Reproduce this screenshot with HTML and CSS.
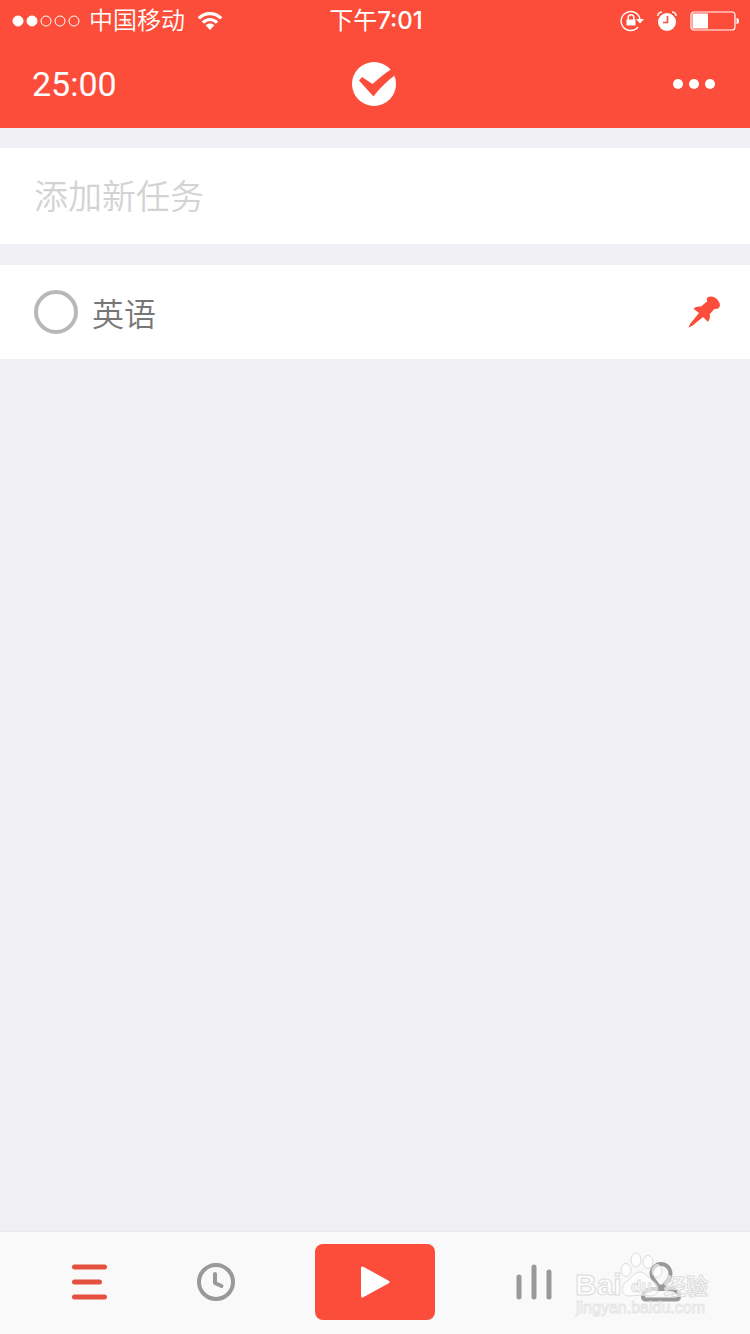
FILE: index.html
```html
<!DOCTYPE html>
<html lang="zh-CN">

<head>
    <meta charset="utf-8">
    <meta name="viewport" content="width=device-width, initial-scale=1.0">
    <title>任务</title>
    <link rel="stylesheet" href="styles.css">
</head>

<body>
    <header class="top">
        <div class="status">
            <div class="status-left">
                <svg width="68" height="12" viewBox="0 0 68 12" fill="none" stroke="#fff">
                    <circle cx="6" cy="6" r="5" fill="#fff" />
                    <circle cx="20" cy="6" r="5" fill="#fff" />
                    <circle cx="34" cy="6" r="5" />
                    <circle cx="48" cy="6" r="5" />
                    <circle cx="62" cy="6" r="5" />
                </svg>
                <span class="carrier">中国移动</span>
                <svg width="26" height="20" viewBox="0 0 26 20" fill="none" stroke="#fff" stroke-width="3.200">
                    <path d="M1.800 7.300C8 1 18 1 24.200 7.300" />
                    <path d="M5.900 11.700C10 7.400 16 7.400 20.100 11.700" />
                    <path d="M8.600 14.300C11.300 12 14.700 12 17.400 14.300L13 19z" fill="#fff" stroke="none" />
                </svg>
            </div>
            <span class="clock">下午<b>7:01</b></span>
            <div class="status-right">
                <svg width="24" height="22" viewBox="0 0 24 22" fill="none" stroke="#fff">
                    <path d="M20 9.500A9.500 9.500 0 1 0 18 17" stroke-width="1.400" />
                    <path d="M16 9h8L20 13.500z" fill="#fff" stroke="none" />
                    <path d="M8.200 10V7.500a2.800 2.800 0 0 1 5.600 0V10" stroke-width="1.500" />
                    <path d="M6.500 9.500h9V15.500h-9z" fill="#fff" stroke="none" />
                </svg>
                <svg width="22" height="22" viewBox="0 0 22 22" fill="none">
                    <circle cx="11" cy="12" r="9" fill="#fff" />
                    <path d="M1.800 6Q2 2.400 6 2M16 2q4 .4 4.200 4" stroke="#fff" stroke-width="1.400" />
                    <path d="M11.500 6v6.500H7" stroke="#fc4d3b" stroke-width="1.600" />
                </svg>
                <svg width="50" height="20" viewBox="0 0 50 20" fill="none">
                    <rect x="1" y="1" width="44" height="18" rx="3" stroke="#fff" stroke-width="1.200" />
                    <path d="M2.500 2.500H18v15H2.500z" fill="#fff" />
                    <path d="M46.500 7q2.500 0 2.500 3t-2.500 3z" fill="#fff" />
                </svg>
            </div>
        </div>
        <nav class="bar">
            <button class="timer">25:00</button>
            <button class="icon" aria-label="已完成">
                <svg width="44" height="44" viewBox="0 0 44 44">
                    <circle cx="22" cy="22" r="22" fill="#fff" />
                    <path d="M7 18.500l3-3.500 10.500 7C27 16.500 32 11.500 39 7.500l5 5C36 18 28 26 21.500 34.500z" fill="#fc4d3b" />
                </svg>
            </button>
            <button class="icon more" aria-label="更多">
                <svg width="44" height="12" viewBox="0 0 44 12" fill="#fff">
                    <circle cx="6" cy="6" r="5" />
                    <circle cx="22" cy="6" r="5" />
                    <circle cx="38" cy="6" r="5" />
                </svg>
            </button>
        </nav>
    </header>

    <main class="list">
        <input class="new-task" type="text" placeholder="添加新任务" aria-label="添加新任务">
        <div class="task">
            <input class="check" type="checkbox" id="task1">
            <label class="name" for="task1">英语</label>
            <button class="icon" aria-label="置顶">
                <svg width="36" height="36" viewBox="0 0 36 36" fill="#fc4d3b">
                    <path d="M21.500 3.500C24 1.300 28.500 2.500 31.300 5.600c3 3.200 3.500 7 1.200 8.600-1.200.8-2.600.9-3.900.6l-4.900 5.400c.6 2.800.2 5.400-1.900 7.600L17 23 6 32l-3.500 1.500L4 30l9-11-5.500-4.200c2-2 4.700-2.800 7.500-2.200l6.300-5.300c-.7-1.400-.8-2.700.2-3.800z" />
                </svg>
            </button>
        </div>
    </main>

    <footer class="tabs">
        <div class="side left">
            <button class="icon" aria-label="任务列表">
                <svg width="40" height="40" viewBox="0 0 40 40" stroke="#e5503f" stroke-width="5" stroke-linecap="round">
                    <path d="M4.500 5h30M4.500 20h25M4.500 35h30" />
                </svg>
            </button>
            <button class="icon" aria-label="历史">
                <svg width="40" height="40" viewBox="0 0 40 40" fill="none" stroke="#999" stroke-width="4" stroke-linecap="round" stroke-linejoin="round">
                    <circle cx="20" cy="20" r="17" />
                    <path d="M19 12v9l6.500 3" />
                </svg>
            </button>
        </div>
        <button class="play" aria-label="开始">
            <svg width="30" height="34" viewBox="0 0 30 34" fill="#fff" stroke="#fff" stroke-width="3" stroke-linejoin="round">
                <path d="M2.500 3v28L28 17z" />
            </svg>
        </button>
        <div class="side right">
            <button class="icon" aria-label="统计">
                <svg width="40" height="40" viewBox="0 0 40 40" stroke="#999" stroke-width="5" stroke-linecap="round">
                    <path d="M5 15v20M20 5v30M35 10v25" />
                </svg>
            </button>
            <button class="icon" aria-label="我的">
                <svg width="40" height="40" viewBox="0 0 40 40" fill="none" stroke="#999" stroke-width="4">
                    <path d="M17 24.500c0-3.500-6.500-6-6.500-13a9.500 9.500 0 0 1 19 0c0 7-6.500 9.500-6.500 13z" />
                    <path d="M9 27h22q7 2 7 7.500 0 3-3 3H5q-3 0-3-3Q2 29 9 27z" />
                </svg>
            </button>
        </div>
        <svg class="mark" width="140" height="70" viewBox="0 0 140 70">
            <g>
                <ellipse cx="51" cy="21" rx="5" ry="6.500" />
                <ellipse cx="61" cy="11" rx="5" ry="7" />
                <ellipse cx="73" cy="13" rx="5" ry="6.500" />
                <ellipse cx="82" cy="22" rx="5" ry="6.500" />
                <path d="M65 23c6 0 8 6 14 10s5 14-3 14c-4 0-7-1-11-1s-7 1-11 1c-8 0-9-10-3-14s8-10 14-10z" />
            </g>
            <text class="mark-big" x="0" y="46">Bai</text>
            <text class="mark-du" x="56" y="43">du</text>
            <text class="mark-cn" x="89" y="45">经验</text>
            <text class="mark-url" x="1" y="64">jingyan.baidu.com</text>
        </svg>
    </footer>
</body>

</html>
```
FILE: styles.css
```css
* {
    box-sizing: border-box;
}

body {
    margin: 0;
    min-height: 100vh;
    display: flex;
    flex-direction: column;
    background-color: #efeff4;
    font-family: Roboto, "Noto Sans CJK SC", sans-serif;
    font-weight: 350;
    color: #777;
}

button {
    border: none;
    padding: 0;
    background: none;
    color: inherit;
    font: inherit;
    cursor: pointer;
}

svg {
    display: block;
}

.top {
    background-color: #fc4d3b;
    color: #fff;
}

.status {
    display: grid;
    grid-template-columns: 1fr auto 1fr;
    align-items: center;
    height: 42px;
    padding: 0 10px 0 12px;
    font-size: 24px;
    line-height: 40px;
}

.status-left,
.status-right {
    display: flex;
    align-items: center;
}

.carrier {
    margin: 0 12px 0 9px;
}

.clock {
    font-weight: 400;
}

.clock b {
    font-family: Inter, sans-serif;
    font-weight: 500;
}

.status-right {
    justify-content: flex-end;
    gap: 12px;
}

.bar {
    display: grid;
    grid-template-columns: 1fr auto 1fr;
    align-items: center;
    height: 86px;
    padding: 0 34px 2px 32px;
}

.timer {
    justify-self: start;
    font-size: 34px;
    font-weight: 400;
}

.more {
    justify-self: end;
}

.list {
    flex: 1;
    display: flex;
    flex-direction: column;
    gap: 21px;
    padding-top: 20px;
}

.new-task {
    width: 100%;
    height: 96px;
    padding: 2px 34px 0;
    border: none;
    outline: none;
    background-color: #fff;
    color: #777;
    font: inherit;
    font-size: 34px;
}

.new-task::placeholder {
    color: #d3d3d3;
}

.task {
    display: flex;
    align-items: center;
    height: 94px;
    padding: 0 28px 0 34px;
    background-color: #fff;
}

.check {
    appearance: none;
    width: 44px;
    height: 44px;
    margin: 0;
    border: 4px solid #b9b7b7;
    border-radius: 50%;
}

.check:checked {
    background-color: #b9b7b7;
}

.name {
    flex: 1;
    margin-left: 14px;
    font-size: 32px;
}

.tabs {
    position: relative;
    display: grid;
    grid-template-columns: 1fr 120px 1fr;
    align-items: center;
    height: 103px;
    padding-bottom: 2px;
    border-top: 1px solid #ebebee;
    background-color: #f9f9f9;
}

.side {
    display: flex;
}

.left {
    padding: 0 36px 0 27px;
}

.right {
    padding: 0 26px 0 36px;
}

.side .icon {
    flex: 1;
    display: flex;
    justify-content: center;
}

.play {
    display: flex;
    align-items: center;
    justify-content: center;
    height: 76px;
    border-radius: 8px;
    background-color: #fc4d3b;
}

/* watermark over the tab bar */
.mark {
    position: absolute;
    right: 35px;
    bottom: 15px;
    pointer-events: none;
    font-family: "Liberation Sans", "Noto Sans CJK SC", sans-serif;
    font-weight: 700;
    fill: #fff;
    fill-opacity: 0.6;
    stroke: #dcdcdc;
}

.mark-big {
    font-size: 30px;
}

.mark-du {
    font-size: 17px;
}

.mark-cn {
    font-size: 22px;
}

.mark-url {
    font-size: 16px;
    font-weight: 400;
    stroke-opacity: 0.7;
}
```
